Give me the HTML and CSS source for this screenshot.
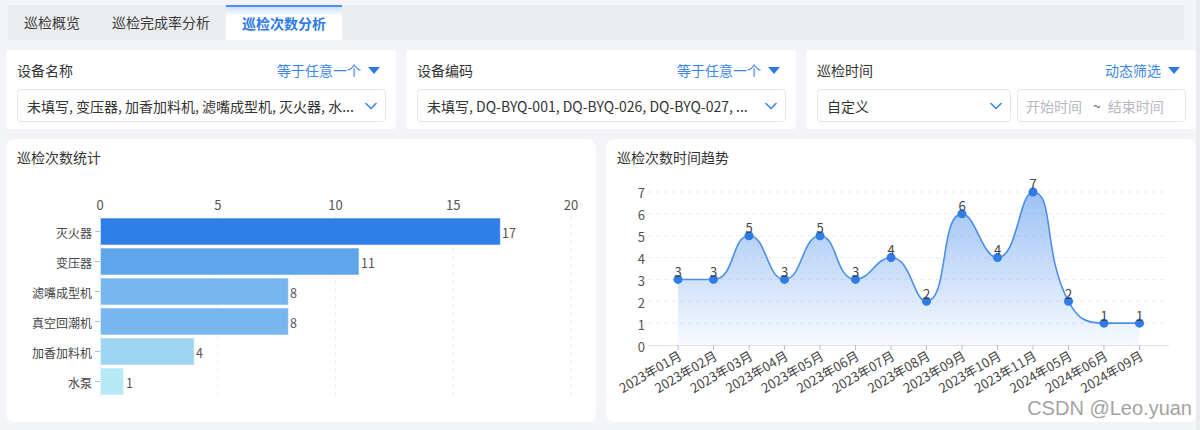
FILE: index.html
```html
<!DOCTYPE html>
<html lang="zh-CN">
<head>
<meta charset="utf-8">
<title>巡检次数分析</title>
<link rel="stylesheet" href="styles.css">
</head>
<body>
<div class="page">
  <div class="tabs">
    <div class="tab">巡检概览</div>
    <div class="tab">巡检完成率分析</div>
    <div class="tab active">巡检次数分析</div>
  </div>

  <div class="filters">
    <div class="filter">
      <div class="filter-head">
        <span class="filter-label">设备名称</span>
        <span class="filter-mode">等于任意一个<i class="caret"></i></span>
      </div>
      <div class="select">
        <span class="select-text">未填写, 变压器, 加香加料机, 滤嘴成型机, 灭火器, 水...</span>
        <svg class="chevron" width="12" height="8" viewBox="0 0 12 8"><polyline points="1,1.5 6,6.5 11,1.5"/></svg>
      </div>
    </div>
    <div class="filter">
      <div class="filter-head">
        <span class="filter-label">设备编码</span>
        <span class="filter-mode">等于任意一个<i class="caret"></i></span>
      </div>
      <div class="select">
        <span class="select-text">未填写, DQ-BYQ-001, DQ-BYQ-026, DQ-BYQ-027, ...</span>
        <svg class="chevron" width="12" height="8" viewBox="0 0 12 8"><polyline points="1,1.5 6,6.5 11,1.5"/></svg>
      </div>
    </div>
    <div class="filter">
      <div class="filter-head">
        <span class="filter-label">巡检时间</span>
        <span class="filter-mode">动态筛选<i class="caret"></i></span>
      </div>
      <div class="time-row">
        <div class="select select-custom">
          <span class="select-text">自定义</span>
          <svg class="chevron" width="12" height="8" viewBox="0 0 12 8"><polyline points="1,1.5 6,6.5 11,1.5"/></svg>
        </div>
        <div class="range">
          <span class="range-ph">开始时间</span>
          <span class="range-sep">~</span>
          <span class="range-ph">结束时间</span>
        </div>
      </div>
    </div>
  </div>

  <div class="charts">
    <div class="chart-card">
      <div class="chart-title">巡检次数统计</div>
      <svg class="chart-svg" width="590" height="252" viewBox="0 0 590 252">
        <g transform="translate(-6 -170)">
          <g class="axis-text" text-anchor="middle">
            <text x="100" y="205">0</text>
            <text x="217.75" y="205">5</text>
            <text x="335.5" y="205">10</text>
            <text x="453.25" y="205">15</text>
            <text x="571" y="205">20</text>
          </g>
          <g class="vgrid">
            <line x1="217.75" y1="217" x2="217.75" y2="398"/>
            <line x1="335.5" y1="217" x2="335.5" y2="398"/>
            <line x1="453.25" y1="217" x2="453.25" y2="398"/>
            <line x1="571" y1="217" x2="571" y2="398"/>
          </g>
          <line class="axis-line" x1="100.5" y1="217" x2="100.5" y2="398"/>
          <g class="ticks">
            <line x1="95" y1="232.5" x2="100" y2="232.5"/>
            <line x1="95" y1="262.5" x2="100" y2="262.5"/>
            <line x1="95" y1="292.5" x2="100" y2="292.5"/>
            <line x1="95" y1="322.5" x2="100" y2="322.5"/>
            <line x1="95" y1="352.5" x2="100" y2="352.5"/>
            <line x1="95" y1="382.5" x2="100" y2="382.5"/>
          </g>
          <g class="cat-text" text-anchor="end">
            <text x="92" y="233">灭火器</text>
            <text x="92" y="263">变压器</text>
            <text x="92" y="293">滤嘴成型机</text>
            <text x="92" y="323">真空回潮机</text>
            <text x="92" y="353">加香加料机</text>
            <text x="92" y="383">水泵</text>
          </g>
          <g class="bars">
            <rect x="100.5" y="219" width="399.85" height="27" fill="#2f7de6"/>
            <rect x="100.5" y="249" width="258.55" height="27" fill="#5fa5ec"/>
            <rect x="100.5" y="279" width="187.9" height="27" fill="#77b6ee"/>
            <rect x="100.5" y="309" width="187.9" height="27" fill="#77b6ee"/>
            <rect x="100.5" y="339" width="93.7" height="27" fill="#9dd5f2"/>
            <rect x="100.5" y="369" width="23.05" height="27" fill="#b6e9f6"/>
          </g>
          <g class="val-text">
            <text x="502" y="233">17</text>
            <text x="361" y="263">11</text>
            <text x="290" y="293">8</text>
            <text x="290" y="323">8</text>
            <text x="196" y="353">4</text>
            <text x="126" y="383">1</text>
          </g>
        </g>
      </svg>
    </div>

    <div class="chart-card">
      <div class="chart-title">巡检次数时间趋势</div>
      <svg class="chart-svg" width="590" height="252" viewBox="0 0 590 252">
        <defs>
          <linearGradient id="areaGrad" gradientUnits="userSpaceOnUse" x1="0" y1="193" x2="0" y2="346">
            <stop offset="0" stop-color="#3a84ea" stop-opacity="0.5"/>
            <stop offset="1" stop-color="#3a84ea" stop-opacity="0.04"/>
          </linearGradient>
        </defs>
        <g transform="translate(-606 -170)">
          <g class="hgrid">
            <line x1="648" y1="324.14" x2="1168" y2="324.14"/>
            <line x1="648" y1="302.29" x2="1168" y2="302.29"/>
            <line x1="648" y1="280.43" x2="1168" y2="280.43"/>
            <line x1="648" y1="258.57" x2="1168" y2="258.57"/>
            <line x1="648" y1="236.71" x2="1168" y2="236.71"/>
            <line x1="648" y1="214.86" x2="1168" y2="214.86"/>
            <line x1="648" y1="193" x2="1168" y2="193"/>
          </g>
          <g class="axis-text" text-anchor="end">
            <text x="645" y="347">0</text>
            <text x="645" y="325">1</text>
            <text x="645" y="303">2</text>
            <text x="645" y="281">3</text>
            <text x="645" y="259">4</text>
            <text x="645" y="237">5</text>
            <text x="645" y="215">6</text>
            <text x="645" y="193.5">7</text>
          </g>
          <path class="area" d="M678,280.43 C695.75,280.43 699.8,280.43 713.5,280.43 C735.3,280.43 731.25,236.71 749,236.71 C766.75,236.71 766.75,280.43 784.5,280.43 C802.25,280.43 802.25,236.71 820,236.71 C837.75,236.71 835.1,280.43 855.5,280.43 C870.6,280.43 875.9,258.57 891,258.57 C911.4,258.57 913.2,302.29 926.5,302.29 C948.7,302.29 939.8,214.86 962,214.86 C975.3,214.86 982.2,258.57 997.5,258.57 C1017.7,258.57 1019.05,193 1033,193 C1054.5,193 1042.46,254.2 1068.5,302.29 C1077.95,319.74 1084.8,324.14 1104,324.14 C1120.33,324.14 1121.75,324.14 1139.5,324.14 L1139.5,346 L678,346 Z"/>
          <line class="axis-line" x1="648" y1="346.5" x2="1169" y2="346.5"/>
          <g class="ticks">
            <line x1="678" y1="346" x2="678" y2="351"/>
            <line x1="713.5" y1="346" x2="713.5" y2="351"/>
            <line x1="749" y1="346" x2="749" y2="351"/>
            <line x1="784.5" y1="346" x2="784.5" y2="351"/>
            <line x1="820" y1="346" x2="820" y2="351"/>
            <line x1="855.5" y1="346" x2="855.5" y2="351"/>
            <line x1="891" y1="346" x2="891" y2="351"/>
            <line x1="926.5" y1="346" x2="926.5" y2="351"/>
            <line x1="962" y1="346" x2="962" y2="351"/>
            <line x1="997.5" y1="346" x2="997.5" y2="351"/>
            <line x1="1033" y1="346" x2="1033" y2="351"/>
            <line x1="1068.5" y1="346" x2="1068.5" y2="351"/>
            <line x1="1104" y1="346" x2="1104" y2="351"/>
            <line x1="1139.5" y1="346" x2="1139.5" y2="351"/>
          </g>
          <path class="line" d="M678,280.43 C695.75,280.43 699.8,280.43 713.5,280.43 C735.3,280.43 731.25,236.71 749,236.71 C766.75,236.71 766.75,280.43 784.5,280.43 C802.25,280.43 802.25,236.71 820,236.71 C837.75,236.71 835.1,280.43 855.5,280.43 C870.6,280.43 875.9,258.57 891,258.57 C911.4,258.57 913.2,302.29 926.5,302.29 C948.7,302.29 939.8,214.86 962,214.86 C975.3,214.86 982.2,258.57 997.5,258.57 C1017.7,258.57 1019.05,193 1033,193 C1054.5,193 1042.46,254.2 1068.5,302.29 C1077.95,319.74 1084.8,324.14 1104,324.14 C1120.33,324.14 1121.75,324.14 1139.5,324.14"/>
          <g class="dots">
            <circle cx="678" cy="280.43" r="4.5"/>
            <circle cx="713.5" cy="280.43" r="4.5"/>
            <circle cx="749" cy="236.71" r="4.5"/>
            <circle cx="784.5" cy="280.43" r="4.5"/>
            <circle cx="820" cy="236.71" r="4.5"/>
            <circle cx="855.5" cy="280.43" r="4.5"/>
            <circle cx="891" cy="258.57" r="4.5"/>
            <circle cx="926.5" cy="302.29" r="4.5"/>
            <circle cx="962" cy="214.86" r="4.5"/>
            <circle cx="997.5" cy="258.57" r="4.5"/>
            <circle cx="1033" cy="193" r="4.5"/>
            <circle cx="1068.5" cy="302.29" r="4.5"/>
            <circle cx="1104" cy="324.14" r="4.5"/>
            <circle cx="1139.5" cy="324.14" r="4.5"/>
          </g>
          <g class="pt-text" text-anchor="middle">
            <text x="678" y="272">3</text>
            <text x="713.5" y="272">3</text>
            <text x="749" y="228">5</text>
            <text x="784.5" y="272">3</text>
            <text x="820" y="228">5</text>
            <text x="855.5" y="272">3</text>
            <text x="891" y="250">4</text>
            <text x="926.5" y="294">2</text>
            <text x="962" y="206">6</text>
            <text x="997.5" y="250">4</text>
            <text x="1033" y="184.5">7</text>
            <text x="1068.5" y="294">2</text>
            <text x="1104" y="316">1</text>
            <text x="1139.5" y="316">1</text>
          </g>
          <g class="x-text" text-anchor="end">
            <text transform="translate(680 355) rotate(-30)">2023年01月</text>
            <text transform="translate(715.5 355) rotate(-30)">2023年02月</text>
            <text transform="translate(751 355) rotate(-30)">2023年03月</text>
            <text transform="translate(786.5 355) rotate(-30)">2023年04月</text>
            <text transform="translate(822 355) rotate(-30)">2023年05月</text>
            <text transform="translate(857.5 355) rotate(-30)">2023年06月</text>
            <text transform="translate(893 355) rotate(-30)">2023年07月</text>
            <text transform="translate(928.5 355) rotate(-30)">2023年08月</text>
            <text transform="translate(964 355) rotate(-30)">2023年09月</text>
            <text transform="translate(999.5 355) rotate(-30)">2023年10月</text>
            <text transform="translate(1035 355) rotate(-30)">2023年11月</text>
            <text transform="translate(1070.5 355) rotate(-30)">2024年05月</text>
            <text transform="translate(1106 355) rotate(-30)">2024年06月</text>
            <text transform="translate(1141.5 355) rotate(-30)">2024年09月</text>
          </g>
        </g>
      </svg>
    </div>
  </div>

  <div class="watermark">CSDN @Leo.yuan</div>
</div>
</body>
</html>
```

FILE: styles.css
```css
* { box-sizing: border-box; }

html, body {
  margin: 0;
  padding: 0;
}

body {
  width: 1200px;
  height: 430px;
  overflow: hidden;
  background: #f3f4f8;
  font-family: "Noto Sans CJK SC", "Noto Sans", sans-serif;
  color: #333;
  font-size: 14px;
}

.page {
  position: relative;
  width: 1200px;
  height: 430px;
  padding: 5px 0 8px 6px;
  border-right: 4px solid #eaebef;
}

/* tabs */
.tabs {
  display: flex;
  height: 35px;
  margin: 0 12px 0 2px;
  background: #ebecf0;
}

.tab {
  padding: 0 16px;
  line-height: 35px;
  font-size: 14px;
  color: #3a3a3a;
  white-space: nowrap;
}

.tab.active {
  color: #2f7be5;
  font-weight: 700;
  background: linear-gradient(to bottom, #cfe0fa 0, #ffffff 9px);
  border-top: 2px solid #4a8ef0;
  line-height: 33px;
}

/* filters */
.filters {
  display: grid;
  grid-template-columns: repeat(3, minmax(0, 1fr));
  gap: 10px;
  margin-top: 10px;
}

.filter {
  min-width: 0;
  background: #fff;
  border-radius: 3px;
  padding: 10px 10px 7px 11px;
}

.filter-head {
  display: flex;
  justify-content: space-between;
  align-items: center;
  height: 20px;
  margin-bottom: 9px;
  padding-right: 6px;
}

.filter-label {
  font-size: 14px;
  color: #333;
}

.filter-mode {
  display: flex;
  align-items: center;
  font-size: 14px;
  color: #3d87e8;
}

.caret {
  display: inline-block;
  width: 0;
  height: 0;
  margin-left: 7px;
  border-left: 6px solid transparent;
  border-right: 6px solid transparent;
  border-top: 7px solid #2f7be5;
}

.select {
  display: flex;
  align-items: center;
  min-width: 0;
  height: 33px;
  padding: 0 8px 0 9px;
  border: 1px solid #e3e6ec;
  border-radius: 4px;
  background: #fff;
}

.select-text {
  min-width: 0;
  white-space: nowrap;
  font-size: 14px;
  color: #333;
}

.chevron {
  flex: none;
  margin-left: auto;
  fill: none;
  stroke: #3d87e8;
  stroke-width: 1.6;
  stroke-linecap: round;
  stroke-linejoin: round;
}

.time-row {
  display: flex;
  gap: 6px;
}

.select-custom {
  width: 194px;
  flex: none;
}

.range {
  flex: 1;
  min-width: 0;
  display: flex;
  align-items: center;
  height: 33px;
  padding: 0 8px;
  border: 1px solid #e3e6ec;
  border-radius: 4px;
  font-size: 14px;
  color: #b5b8bf;
  white-space: nowrap;
}

.range-sep {
  margin: 0 7px 0 11px;
  color: #666;
}

/* charts */
.charts {
  display: grid;
  grid-template-columns: repeat(2, minmax(0, 1fr));
  gap: 10px;
  margin-top: 10px;
}

.chart-card {
  min-width: 0;
  background: #fff;
  border-radius: 8px;
  height: 283px;
  overflow: hidden;
}

.chart-title {
  height: 30px;
  padding: 8px 11px 0;
  line-height: 20px;
  font-size: 14px;
  color: #333;
}

.chart-svg {
  display: block;
}

.chart-svg text {
  font-family: "Noto Sans CJK SC", "Noto Sans", sans-serif;
  dominant-baseline: central;
}

.axis-text text {
  font-size: 13px;
  fill: #555;
}

.cat-text text {
  font-size: 12px;
  fill: #444;
}

.val-text text {
  font-size: 12.5px;
  fill: #555;
}

.pt-text text {
  font-size: 13px;
  fill: #444;
}

.x-text text {
  font-size: 13px;
  fill: #444;
}

.vgrid line,
.hgrid line {
  stroke: #e9ebf0;
  stroke-width: 1;
  stroke-dasharray: 4 4;
}

.axis-line {
  stroke: #dde2ea;
  stroke-width: 1;
}

.ticks line {
  stroke: #b9bec8;
  stroke-width: 1;
}

.bars rect {
  stroke: rgba(255, 255, 255, 0.55);
  stroke-width: 1;
}

.area {
  fill: url(#areaGrad);
  stroke: none;
}

.line {
  fill: none;
  stroke: #4d8fe8;
  stroke-width: 1.6;
}

.dots circle {
  fill: #2f7ce8;
}

/* watermark overlay */
.watermark {
  position: absolute;
  right: 4px;
  top: 397px;
  font-family: "Liberation Sans", Arial, sans-serif;
  font-size: 20px;
  color: #a3a3a3;
  text-shadow: 0 0 2px #fff, 0 0 2px #fff;
  white-space: nowrap;
}
```
